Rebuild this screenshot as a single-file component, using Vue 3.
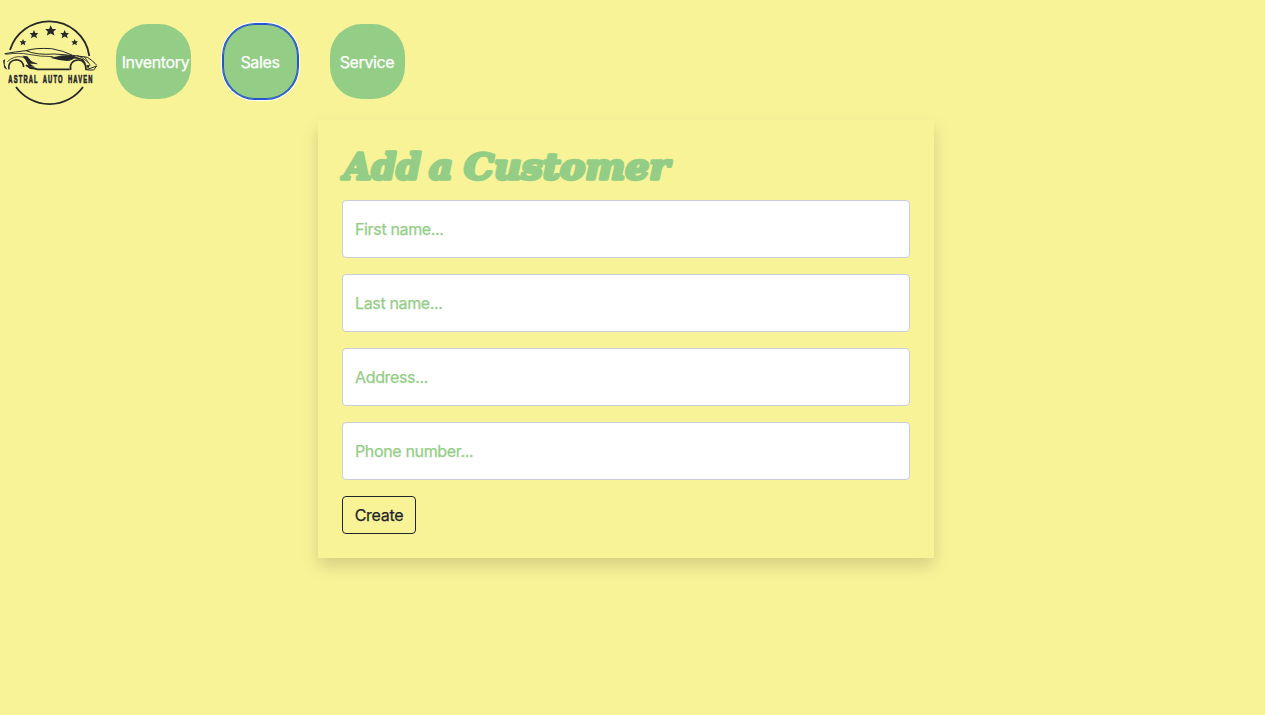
<script setup>
const links = [
  { label: 'Inventory', kind: 'inventory' },
  { label: 'Sales', kind: 'sales' },
  { label: 'Service', kind: 'service' },
]
const fields = ['First name...', 'Last name...', 'Address...', 'Phone number...']
const stars = [
  { x: 152, y: 47, s: 1.65 },
  { x: 102, y: 58, s: 1.3 },
  { x: 194, y: 58, s: 1.3 },
  { x: 69, y: 82, s: 1 },
  { x: 224, y: 82, s: 1 },
]
</script>

<template>
  <div class="page">
    <header class="nav">
      <svg class="logo" viewBox="0 0 300 285" role="img" aria-label="Astral Auto Haven">
        <g fill="none" stroke="#26282a">
          <path d="M30 105A123 123 0 0 1 149 19A121 121 0 0 1 268 123" stroke-width="5.5" />
          <path d="M48 216A124 124 0 0 0 249 216" stroke-width="5.5" />
          <path d="M14 116Q48 110 78 107Q105 98 155 101Q190 107 218 121L262 127Q274 134 285 145L290 151" stroke-width="3" />
          <path d="M16 118Q58 112 85 118Q120 125 160 125" stroke-width="2.5" />
          <path d="M78 107Q110 121 162 117Q199 119 218 122" stroke-width="3" />
          <path d="M22 140Q42 121 68 126Q90 140 112 147" stroke-width="2.5" />
          <path d="M27 163C24 146 33 135 48 134C62 134 70 143 71 156" stroke-width="4.5" />
          <path d="M78 151L112 163H209" stroke-width="5" />
          <path d="M212 165C208 148 218 135 234 135C249 135 259 147 258 165" stroke-width="5" />
          <path d="M231 121Q251 128 265 143M253 125L271 151" stroke-width="2.5" />
          <path d="M257 165L290 153L281 165H262" stroke-width="3" />
        </g>
        <g fill="#26282a">
          <path d="M9 137L15 132L14 149L22 164L13 159Z" />
          <path d="M68 122L82 124L96 141L112 147L90 146L105 156L78 151L97 157L114 164L90 162L75 151L85 151L76 134Z" />
          <path d="M150 128Q185 120 219 123L228 127Q215 138 201 138Q176 136 150 128Z" />
          <path d="M170 124Q198 118 222 123L250 133L260 149L243 134L218 129Z" />
          <path d="M259 151L270 150L264 162Z" />
          <path
            v-for="star in stars"
            :key="star.x"
            :transform="`translate(${star.x} ${star.y}) scale(${star.s})`"
            d="M0-10L3-3L10-3L5 2L7 9L0 5L-7 9L-5 2L-10-3L-3-3Z"
          />
        </g>
        <text class="brand" transform="translate(25 205) scale(0.56 1)" textLength="451" lengthAdjust="spacing">ASTRAL AUTO HAVEN</text>
      </svg>
      <nav class="links">
        <button v-for="link in links" :key="link.kind" type="button" class="pill" :class="link.kind">
          <span>{{ link.label }}</span>
        </button>
      </nav>
    </header>

    <main class="card">
      <h1 class="title">
        <svg width="350" height="48" viewBox="0 0 350 48">
          <text x="10" y="34.6" textLength="77" lengthAdjust="spacingAndGlyphs">Add</text>
          <text x="95" y="34.6" textLength="24" lengthAdjust="spacingAndGlyphs">a</text>
          <text x="130" y="34.6" textLength="205" lengthAdjust="spacingAndGlyphs">Customer</text>
        </svg>
      </h1>
      <form class="form" @submit.prevent>
        <input v-for="field in fields" :key="field" class="field" type="text" :placeholder="field" />
        <button class="create" type="submit">Create</button>
      </form>
    </main>
  </div>
</template>

<style>
body {
  background: #f9f398;
}
</style>

<style scoped>
.page {
  height: 715px;
  overflow: hidden;
  font-family: Inter, "Liberation Sans", sans-serif;
  font-size: 16px;
  line-height: 24px;
  background: #f9f398;
  -webkit-text-stroke: 0.25px;
}
.nav {
  display: flex;
  height: 120px;
}
.logo {
  width: 100px;
  height: 95px;
  margin-top: 15px;
}
.brand {
  font: bold 31px "Liberation Sans", sans-serif;
  word-spacing: 8px;
  fill: #26282a;
  stroke: #26282a;
  stroke-width: 2px;
}
.links {
  display: flex;
  gap: 32px;
  margin: 24px 0 0 16px;
}
.pill {
  display: flex;
  align-items: center;
  justify-content: center;
  width: 75px;
  height: 75px;
  padding: 0;
  border: 0;
  border-radius: 32px;
  background: #94ce86;
  color: #fff;
  font: inherit;
  letter-spacing: -0.36px;
  white-space: nowrap;
}
.pill span {
  margin-left: -1px;
}
.inventory span {
  margin-left: 4px;
}
.sales {
  box-shadow: inset 0 0 0 1px #2455c9, 0 0 0 1px #2455c9, 0 0 0 2px #fff;
}
.card {
  box-sizing: border-box;
  width: 616px;
  height: 438px;
  margin-left: 318px;
  padding: 24px;
  background: #f9f398;
  box-shadow: 0 8px 16px rgba(0, 0, 0, 0.15);
}
.title {
  height: 48px;
  margin: 0 0 8px -8px;
}
.title svg {
  display: block;
  overflow: visible;
}
.title text {
  font: italic bold 36px "DejaVu Serif", serif;
  fill: #94ce86;
  stroke: #94ce86;
  stroke-width: 3.4px;
  stroke-linejoin: round;
}
.form {
  display: flex;
  flex-direction: column;
  align-items: flex-start;
  gap: 16px;
}
.field {
  box-sizing: border-box;
  width: 100%;
  height: 58px;
  padding: 0 12px;
  border: 1px solid #c9cdd8;
  border-radius: 4px;
  background: #fff;
  font: inherit;
  letter-spacing: -0.35px;
}
.field::placeholder {
  color: #94ce86;
  opacity: 1;
}
.create {
  box-sizing: border-box;
  width: 74px;
  height: 38px;
  padding: 0;
  border: 1px solid #212529;
  border-radius: 4px;
  background: transparent;
  color: #212529;
  font: inherit;
  letter-spacing: -0.3px;
}
</style>
